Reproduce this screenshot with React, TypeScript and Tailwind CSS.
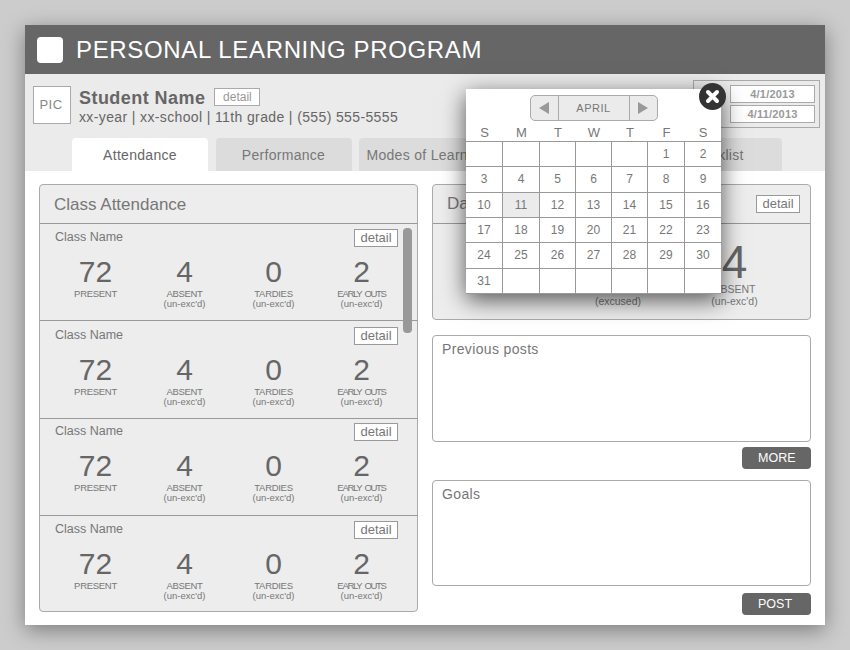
const TABS = ["Attendance", "Performance", "Modes of Learning", "Assessments", "Checklist"];

const ROWS = [
  { cls: "h-[96px] pt-[5px]" },
  { cls: "h-[98px] pt-[6px] border-t border-[#999]" },
  { cls: "h-[97px] pt-[4px] border-t border-[#999]" },
  { cls: "h-[96px] pt-[5px] border-t border-[#999]" },
];

const STATS = [
  { value: "72", label: "PRESENT", sub: "", tight: "tracking-[-0.3px]" },
  { value: "4", label: "ABSENT", sub: "(un-exc'd)", tight: "tracking-[-0.3px]" },
  { value: "0", label: "TARDIES", sub: "(un-exc'd)", tight: "tracking-[-0.3px]" },
  { value: "2", label: "EARLY OUTS", sub: "(un-exc'd)", tight: "tracking-[-1.3px] [word-spacing:2px]" },
];

const DAYS = ["S", "M", "T", "W", "T", "F", "S"];
const CELLS = [
  "", "", "", "", "", "1", "2",
  "3", "4", "5", "6", "7", "8", "9",
  "10", "11", "12", "13", "14", "15", "16",
  "17", "18", "19", "20", "21", "22", "23",
  "24", "25", "26", "27", "28", "29", "30",
  "31", "", "", "", "", "", "",
];

function DetailButton() {
  return (
    <div className="flex h-[18px] w-[44px] items-center justify-center border border-[#999] bg-white text-[13px] text-[#777]">
      detail
    </div>
  );
}

function ClassRow({ cls }: { cls: string }) {
  return (
    <div className={`box-border ${cls}`}>
      <div className="flex items-start justify-between pl-[15px] pr-[19px]">
        <span className="text-[12.5px] leading-[16px] text-[#777]">Class Name</span>
        <DetailButton />
      </div>
      <div className="grid grid-cols-[89px_89px_89px_87px] pl-[11px] pt-[8px]">
        {STATS.map((s) => (
          <div key={s.label} className="flex flex-col items-center">
            <span className="text-[30px] leading-[33px] text-[#666]">{s.value}</span>
            <span className={`text-[9.5px] leading-[11px] text-[#777] ${s.tight}`}>{s.label}</span>
            <span className="text-[9.5px] leading-[10px] text-[#777]">{s.sub}</span>
          </div>
        ))}
      </div>
    </div>
  );
}

function Calendar() {
  return (
    <div className="absolute left-[441px] top-[64px] w-[255px] bg-white shadow-[0_6px_22px_rgba(0,0,0,0.65)]">
      <div className="flex justify-center pt-[6px]">
        <div className="flex h-[26px] w-[128px] overflow-hidden rounded-[5px] border border-[#aaa] bg-[#ebebeb]">
          <div className="flex w-[28px] items-center justify-center border-r border-[#aaa]">
            <svg width="10" height="12" viewBox="0 0 10 12"><path d="M10 0v12L0 6z" fill="#999" /></svg>
          </div>
          <div className="flex flex-1 items-center justify-center text-[11px] tracking-[0.5px] text-[#777]">APRIL</div>
          <div className="flex w-[28px] items-center justify-center border-l border-[#aaa]">
            <svg width="10" height="12" viewBox="0 0 10 12"><path d="M0 0v12L10 6z" fill="#999" /></svg>
          </div>
        </div>
      </div>
      <div className="grid h-[20px] grid-cols-[37px_37px_36px_36px_36px_37px_36px] items-center pt-[4px]">
        {DAYS.map((d, i) => (
          <span key={i} className="text-center text-[13px] leading-[14px] text-[#777]">{d}</span>
        ))}
      </div>
      <div className="grid grid-cols-[37px_37px_36px_36px_36px_37px_36px] auto-rows-[25.33px] border-t border-[#999]">
        {CELLS.map((c, i) => (
          <div
            key={i}
            className={`box-border flex items-center justify-center border-b border-[#999] text-[12px] text-[#777] ${i % 7 === 6 ? "" : "border-r"} ${c === "11" ? "bg-[#ebebeb]" : ""}`}
          >
            {c}
          </div>
        ))}
      </div>
      <div className="absolute right-[-5px] top-[-6px] flex h-[27px] w-[27px] items-center justify-center rounded-full bg-[#333]">
        <svg width="15" height="15" viewBox="0 0 15 15">
          <path d="M3 3l9 9M12 3l-9 9" stroke="#fff" strokeWidth="4" strokeLinecap="round" />
        </svg>
      </div>
    </div>
  );
}

export default function App() {
  return (
    <div className="h-[650px] w-[850px] bg-[#ccc] p-[25px] font-['Liberation_Sans',Arial,sans-serif]">
      <div className="relative flex h-[600px] w-[800px] flex-col bg-white shadow-[0_5px_20px_rgba(0,0,0,0.4)]">
        {/* header */}
        <div className="flex h-[49px] items-center gap-[13px] bg-[#666] pl-[12px]">
          <div className="h-[26px] w-[26px] rounded-[4px] bg-white" />
          <h1 className="pt-[1px] text-[24px] tracking-[0.65px] text-white">PERSONAL LEARNING PROGRAM</h1>
        </div>

        {/* student info */}
        <div className="h-[97px] bg-[#ebebeb]">
          <div className="flex h-[64px] items-start justify-between pl-[8px] pr-[5px]">
            <div className="mt-[12px] flex gap-[8px]">
              <div className="flex h-[38px] w-[38px] items-center justify-center border border-[#aaa] bg-white pr-[2px] text-[13px] tracking-[0.5px] text-[#888]">
                PIC
              </div>
              <div>
                <div className="flex h-[22px] items-center gap-[9px]">
                  <span className="mt-[2px] text-[18px] font-bold leading-[22px] tracking-[0.45px] text-[#666]">Student Name</span>
                  <div className="flex h-[18px] w-[46px] items-center justify-center border border-[#aaa] bg-white text-[12px] text-[#999]">
                    detail
                  </div>
                </div>
                <div className="text-[14px] leading-[18px] tracking-[0.37px] text-[#666]">xx-year | xx-school | 11th grade | (555) 555-5555</div>
              </div>
            </div>
            <div className="mt-[6px] flex h-[48px] w-[127px] flex-col items-end gap-[2px] border border-[#aaa] pr-[4px] pt-[4px]">
              <div className="flex h-[18px] w-[85px] items-center justify-center border border-[#aaa] bg-white text-[11px] font-bold tracking-[0.2px] text-[#999]">4/1/2013</div>
              <div className="flex h-[18px] w-[85px] items-center justify-center border border-[#aaa] bg-white text-[11px] font-bold tracking-[0.2px] text-[#999]">4/11/2013</div>
            </div>
          </div>
          <div className="flex gap-[7.5px] pl-[47px]">
            {TABS.map((t, i) => (
              <div
                key={t}
                className={`flex h-[33px] w-[136px] items-center justify-center whitespace-nowrap rounded-t-[4px] pt-[1px] text-[14px] tracking-[0.3px] ${i === 0 ? "bg-white text-[#666]" : "bg-[#dcdcdc] text-[#777]"}`}
              >
                {t}
              </div>
            ))}
          </div>
        </div>

        {/* body */}
        <div className="flex gap-[14px] pl-[14px] pt-[13px]">
          <div className="relative box-border h-[428px] w-[379px] rounded-[4px] border border-[#aaa] bg-[#ededed]">
            <div className="flex h-[38px] items-center pl-[14px] pt-[2px] text-[17px] text-[#777]">Class Attendance</div>
            <div className="border-t border-[#999]">
              {ROWS.map((r, i) => (
                <ClassRow key={i} cls={r.cls} />
              ))}
            </div>
            <div className="absolute left-[363px] top-[43px] h-[105px] w-[9px] rounded-[4px] bg-[#999]" />
          </div>

          <div className="w-[379px]">
            <div className="box-border h-[136px] rounded-[4px] border border-[#aaa] bg-[#ededed]">
              <div className="flex h-[39px] items-center justify-between border-b border-[#999] pl-[14px] pr-[10px] text-[17px] text-[#777]">
                <span>Daily Attendance</span>
                <DetailButton />
              </div>
              <div className="grid grid-cols-[128px_114px_119px] pt-[17px]">
                <div />
                <div className="flex flex-col items-center pt-[42px] text-[10.5px] leading-[12px] text-[#777]">
                  <span>&nbsp;</span>
                  <span>(excused)</span>
                </div>
                <div className="flex flex-col items-center text-[#666]">
                  <span className="text-[46px] leading-[42px]">4</span>
                  <span className="text-[10.5px] leading-[12px] text-[#777]">ABSENT</span>
                  <span className="text-[10.5px] leading-[12px] text-[#777]">(un-exc'd)</span>
                </div>
              </div>
            </div>

            <div className="mt-[15px] box-border h-[107px] rounded-[4px] border border-[#aaa] bg-white pl-[9px] pt-[3px] text-[14px] tracking-[0.35px] text-[#777]">
              Previous posts
            </div>
            <div className="mt-[5px] flex justify-end">
              <div className="flex h-[22px] w-[69px] items-center rounded-[4px] bg-[#666] pl-[16px] text-[12.5px] text-white">MORE</div>
            </div>

            <div className="mt-[11px] box-border h-[106px] rounded-[4px] border border-[#aaa] bg-white pl-[9px] pt-[3px] text-[14px] tracking-[0.35px] text-[#777]">
              Goals
            </div>
            <div className="mt-[7px] flex justify-end">
              <div className="flex h-[22px] w-[69px] items-center rounded-[4px] bg-[#666] pl-[16px] text-[12.5px] text-white">POST</div>
            </div>
          </div>
        </div>

        <Calendar />
      </div>
    </div>
  );
}
